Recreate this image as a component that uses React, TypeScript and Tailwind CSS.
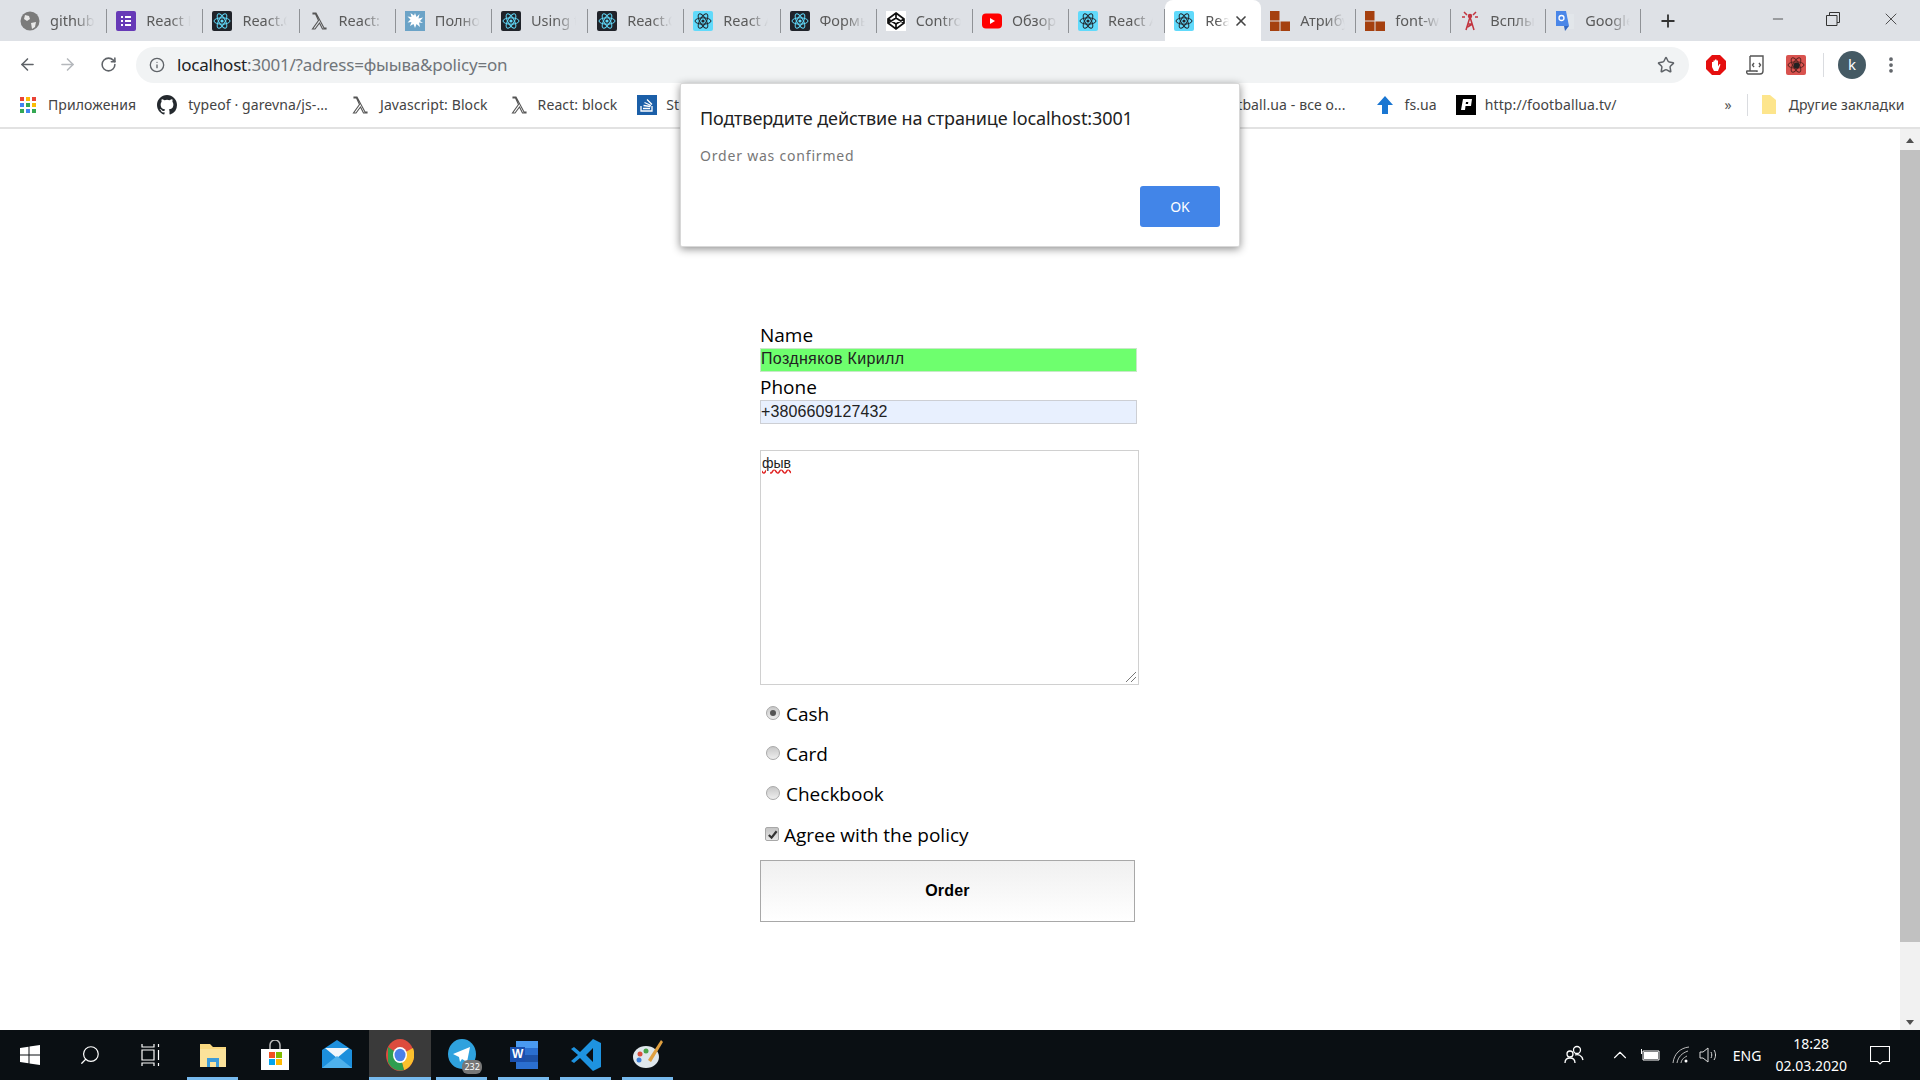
import { ArrowLeft, ArrowRight, RotateCw, Info, Star, Plus, X, Minus, ChevronUp, EllipsisVertical, Search } from "lucide-react"

type IconKind = "globe" | "list" | "atomDark" | "atomLight" | "lambda" | "splash" | "pen" | "youtube" | "blocks" | "tower" | "translate"

const tabs: { icon: IconKind; label: string; active?: boolean; narrow?: boolean }[] = [
  { icon: "globe", label: "github" },
  { icon: "list", label: "React H" },
  { icon: "atomDark", label: "React.C" },
  { icon: "lambda", label: "React: l" },
  { icon: "splash", label: "Полно" },
  { icon: "atomDark", label: "Using t" },
  { icon: "atomDark", label: "React.C" },
  { icon: "atomLight", label: "React A" },
  { icon: "atomDark", label: "Формы" },
  { icon: "pen", label: "Contro" },
  { icon: "youtube", label: "Обзор" },
  { icon: "atomLight", label: "React A" },
  { icon: "atomLight", label: "Rea", active: true },
  { icon: "blocks", label: "Атрибу", narrow: true },
  { icon: "blocks", label: "font-w", narrow: true },
  { icon: "tower", label: "Всплы", narrow: true },
  { icon: "translate", label: "Google", narrow: true },
]

function Atom({ bg, color }: { bg: string; color: string }) {
  return (
    <svg viewBox="0 0 20 20" className="h-5 w-5 shrink-0">
      <rect width="20" height="20" rx="2" fill={bg} />
      <g fill="none" stroke={color} strokeWidth="1">
        <ellipse cx="10" cy="10" rx="8" ry="3.2" />
        <ellipse cx="10" cy="10" rx="8" ry="3.2" transform="rotate(60 10 10)" />
        <ellipse cx="10" cy="10" rx="8" ry="3.2" transform="rotate(120 10 10)" />
      </g>
      <circle cx="10" cy="10" r="1.6" fill={color} />
    </svg>
  )
}

function Lambda() {
  return (
    <svg viewBox="0 0 20 20" className="h-5 w-5 shrink-0" fill="none" stroke="#555" strokeWidth="1.1">
      <path d="M4 2h3l8 15h2v1h-3.500L10.500 12 6 18H3.500L9.500 9.500 6.500 3H4z" />
    </svg>
  )
}

function Favicon({ kind }: { kind: IconKind }) {
  switch (kind) {
    case "globe":
      return (
        <svg viewBox="0 0 20 20" className="h-5 w-5 shrink-0">
          <circle cx="10" cy="10" r="9.5" fill="#7b7b7b" />
          <path d="M5 4l4 1 1 3-3 2-3-2zM11 12l5-1-1 5-3 2z" fill="#e8e8e8" />
        </svg>
      )
    case "list":
      return (
        <svg viewBox="0 0 20 20" className="h-5 w-5 shrink-0">
          <rect width="20" height="20" rx="2" fill="#673ab7" />
          <path d="M5 5h2v2H5zM9 5h6v2H9zM5 9h2v2H5zM9 9h6v2H9zM5 13h2v2H5zM9 13h6v2H9z" fill="#fff" />
        </svg>
      )
    case "atomDark":
      return <Atom bg="#20232a" color="#61dafb" />
    case "atomLight":
      return <Atom bg="#61dafb" color="#20232a" />
    case "lambda":
      return <Lambda />
    case "splash":
      return (
        <svg viewBox="0 0 20 20" className="h-5 w-5 shrink-0">
          <rect width="20" height="20" fill="#6ba3c7" />
          <path d="M10 2l1.500 4 3-3-1 4.500 4.500-1-3 3.500 3 2-4-.5 1 4.500-3.500-3-1.500 4-1.500-4-3.500 2 1.500-4-4 .5 3-3-3-3 4 .5-1-4 3.500 2.500z" fill="#fff" />
        </svg>
      )
    case "pen":
      return (
        <svg viewBox="0 0 20 20" className="h-5 w-5 shrink-0">
          <rect width="20" height="20" fill="#fff" />
          <path d="M10 2l8 6v4l-8 6-8-6V8zM10 2v5M10 13v5M2 8l8 5 8-5M2 12l8-5 8 5" fill="none" stroke="#111" strokeWidth="1.700" />
        </svg>
      )
    case "youtube":
      return (
        <svg viewBox="0 0 20 20" className="h-5 w-5 shrink-0">
          <rect y="2.500" width="20" height="15" rx="4" fill="#f00" />
          <path d="M8 7l5 3-5 3z" fill="#fff" />
        </svg>
      )
    case "blocks":
      return (
        <svg viewBox="0 0 20 20" className="h-5 w-5 shrink-0" fill="#a5400f">
          <rect x="0" y="0" width="9.500" height="9.500" />
          <rect x="0" y="10.500" width="9.500" height="9.500" />
          <rect x="10.500" y="10.500" width="9.500" height="9.500" />
        </svg>
      )
    case "tower":
      return (
        <svg viewBox="0 0 20 20" className="h-5 w-5 shrink-0" fill="none" stroke="#c2343f" strokeWidth="1.500">
          <path d="M10 6 6 19M10 6l4 13M8 13h4M7.500 16l5-3" />
          <circle cx="10" cy="5" r="1.500" fill="#c2343f" />
          <path d="M4 1l3 3M16 1l-3 3M2 6h3M18 6h-3" />
        </svg>
      )
    case "translate":
      return (
        <svg viewBox="0 0 20 20" className="h-5 w-5 shrink-0">
          <path d="M9 3h10v15H10z" fill="#e2e6ea" />
          <path d="M1 0h10l3 15H1z" fill="#4a86e8" />
          <path d="M10 20l-1-5h5z" fill="#3367c0" />
          <circle cx="6.500" cy="7" r="2.500" fill="none" stroke="#fff" strokeWidth="1.300" />
        </svg>
      )
  }
}

function Tab({ icon, label, active, narrow }: { icon: IconKind; label: string; active?: boolean; narrow?: boolean }) {
  if (active) {
    return (
      <div className="flex h-[41px] w-[96px] shrink-0 items-center rounded-t-lg bg-white pl-[9px]">
        <Favicon kind={icon} />
        <span className="ml-[11px] w-[24px] overflow-hidden text-[14.500px] whitespace-nowrap text-[#5a5a5a] [mask-image:linear-gradient(to_right,black_50%,transparent)]">{label}</span>
        <X size={16} strokeWidth={2.5} className="ml-[4px] text-[#444]" />
      </div>
    )
  }
  return (
    <div className={`flex h-[41px] shrink-0 items-center pl-[9px] ${narrow ? "w-[95px]" : "w-[96.200px]"}`}>
      <Favicon kind={icon} />
      <span className="ml-[10px] w-[45px] overflow-hidden text-[14.500px] whitespace-nowrap text-[#5a5a5a] [mask-image:linear-gradient(to_right,black_55%,transparent)]">{label}</span>
      <span className="ml-auto h-[24px] w-px bg-[#8f9296]" />
    </div>
  )
}

function TabStrip() {
  return (
    <div className="flex h-[41px] items-end bg-[#dee1e6] pl-[11px]">
      {tabs.map((t, i) => (
        <Tab key={i} icon={t.icon} label={t.label} active={t.active} narrow={t.narrow} />
      ))}
      <Plus size={20} strokeWidth={2.2} className="mb-[10px] ml-[17px] text-[#333]" />
      <div className="ml-auto flex items-center pb-[12px] text-[#333]">
        <Minus size={16} strokeWidth={1.2} className="mr-[40px]" />
        <svg viewBox="0 0 14 14" className="mr-[41px] h-[14px] w-[14px]" fill="none" stroke="#333">
          <path d="M3.500 3V.500h10v10H11M.500 3.500h10.500v10H.500z" />
        </svg>
        <X size={20} strokeWidth={1} className="mr-[19px]" />
      </div>
    </div>
  )
}

function AddressBar() {
  return (
    <div className="flex h-[44px] items-center bg-white pt-[3px] pl-[18px]">
      <ArrowLeft size={19} strokeWidth={2} className="text-[#5f6368]" />
      <ArrowRight size={19} strokeWidth={2} className="ml-[21px] text-[#b5b8bc]" />
      <RotateCw size={17} strokeWidth={2.2} className="ml-[23px] text-[#5f6368]" />
      <div className="ml-[19px] flex h-[36px] w-[1553px] items-center rounded-full bg-[#f1f3f4] pl-[13px]">
        <Info size={16} strokeWidth={2} className="text-[#5f6368]" />
        <span className="ml-[12px] text-[17px] tracking-[-0.2px] text-[#70757a]">
          <span className="text-[#202124]">localhost</span>:3001/?adress=фыыва&amp;policy=on
        </span>
        <Star size={18} strokeWidth={2} className="mr-[14px] ml-auto text-[#5f6368]" />
      </div>
      <svg viewBox="0 0 20 20" className="ml-[17px] h-[20px] w-[20px] shrink-0">
        <path d="M6 0h8l6 6v8l-6 6H6l-6-6V6z" fill="#e50f0f" />
        <path d="M6 12V7h1.500v3V5.500H9v4V4.500h1.500v5V5.500H12v6l1.500-2.500 1 .5L12 16H8z" fill="#fff" />
      </svg>
      <svg viewBox="0 0 20 20" className="ml-[20px] h-[20px] w-[20px] shrink-0" fill="none" stroke="#555" strokeWidth="1.400">
        <path d="M4 1h13v15a3 3 0 0 1-3 3H2a2 2 0 0 1-1-3h10v1M4 1v15M8 8 6.500 10 8 12M13 8l1.500 2-1.500 2" />
      </svg>
      <svg viewBox="0 0 20 20" className="ml-[20px] h-[20px] w-[20px] shrink-0">
        <rect width="20" height="20" rx="2" fill="#d9534f" />
        <g fill="none" stroke="#5a2420" strokeWidth="1">
          <ellipse cx="10" cy="10" rx="8" ry="3.200" />
          <ellipse cx="10" cy="10" rx="8" ry="3.200" transform="rotate(60 10 10)" />
          <ellipse cx="10" cy="10" rx="8" ry="3.200" transform="rotate(120 10 10)" />
        </g>
        <circle cx="10.500" cy="10.500" r="3" fill="#222" />
      </svg>
      <span className="ml-[17px] h-[24px] w-px bg-[#dadce0]" />
      <span className="ml-[14px] flex h-[28px] w-[28px] shrink-0 items-center justify-center rounded-full bg-[#455a64] text-[15px] text-white">k</span>
      <EllipsisVertical size={20} strokeWidth={2.5} className="ml-[15px] text-[#5f6368]" />
    </div>
  )
}

function Bookmark({ children, label, className }: { children?: React.ReactNode; label: string; className: string }) {
  return (
    <div className={`flex shrink-0 items-center whitespace-nowrap ${className}`}>
      {children}
      <span className="text-[14px] tracking-[0.1px] text-[#444]">{label}</span>
    </div>
  )
}

function BookmarksBar() {
  const dots = ["#ea4335", "#fbbc05", "#ea4335", "#4285f4", "#34a853", "#fbbc05", "#34a853", "#4285f4", "#34a853"]
  return (
    <div className="flex h-[44px] items-center border-b-2 border-[#e2e2e2] bg-white pb-[3px] pl-[20px]">
      <div className="grid h-4 w-4 shrink-0 grid-cols-[4px_4px_4px] grid-rows-[4px_4px_4px] gap-[2px]">
        {dots.map((c, i) => (
          <span key={i} style={{ backgroundColor: c }} />
        ))}
      </div>
      <Bookmark label="Приложения" className="ml-[12px]" />
      <Bookmark label="typeof · garevna/js-..." className="ml-[21px]">
        <svg viewBox="0 0 16 16" className="mr-[11px] h-5 w-5" fill="#24292e">
          <path d="M8 0C3.580 0 0 3.580 0 8c0 3.540 2.290 6.530 5.470 7.590.4.070.55-.17.55-.38v-1.340c-2.230.48-2.700-1.070-2.700-1.070-.36-.92-.89-1.170-.89-1.170-.73-.5.050-.49.050-.49.800.06 1.230.82 1.230.82.710 1.230 1.870.87 2.330.66.070-.52.280-.87.510-1.070-1.780-.2-3.640-.89-3.640-3.950 0-.87.310-1.590.820-2.150-.080-.2-.36-1.020.080-2.120 0 0 .67-.21 2.200.82a7.600 7.600 0 0 1 4 0c1.530-1.040 2.200-.82 2.200-.82.440 1.100.160 1.920.080 2.120.510.560.820 1.270.820 2.150 0 3.070-1.870 3.750-3.650 3.950.290.250.540.730.540 1.480v2.200c0 .21.150.46.550.38A8 8 0 0 0 16 8c0-4.420-3.580-8-8-8z" />
        </svg>
      </Bookmark>
      <Bookmark label="Javascript: Block" className="ml-[22px]">
        <span className="mr-[10px]"><Lambda /></span>
      </Bookmark>
      <Bookmark label="React: block" className="ml-[21px]">
        <span className="mr-[9px]"><Lambda /></span>
      </Bookmark>
      <Bookmark label="St" className="ml-[20px]">
        <svg viewBox="0 0 20 20" className="mr-[9px] h-5 w-5">
          <rect width="20" height="20" fill="#1b5fa8" />
          <path d="M4 11v5h11v-5M6 13.500h7M6.500 10.500l7 1M7.500 7.500l6.500 3M10 4.500l5 5" fill="none" stroke="#fff" strokeWidth="1.300" />
        </svg>
      </Bookmark>
      <Bookmark label="tball.ua - все о..." className="ml-[558px]" />
      <Bookmark label="fs.ua" className="ml-[29px]">
        <svg viewBox="0 0 20 20" className="mr-[10px] h-5 w-5" fill="#1976d2">
          <path d="M10 1 18 10h-5v9H7v-9H2z" />
        </svg>
      </Bookmark>
      <Bookmark label="http://footballua.tv/" className="ml-[19px]">
        <svg viewBox="0 0 20 20" className="mr-[9px] h-5 w-5 shrink-0">
          <rect width="20" height="20" fill="#000" />
          <path d="M5 15 7 4h9l-1 7H9.500l-.5 4zM10 7l-.3 2h2.300l.3-2z" fill="#fff" fillRule="evenodd" />
        </svg>
      </Bookmark>
      <span className="ml-[108px] text-[14px] text-[#555]">»</span>
      <span className="ml-[15px] h-[22px] w-px bg-[#dadce0]" />
      <svg viewBox="0 0 16 20" className="ml-[13px] h-[20px] w-[16px] shrink-0">
        <path d="M1 0h8l6 5v14H1z" fill="#fde58c" />
      </svg>
      <Bookmark label="Другие закладки" className="ml-[12px]" />
    </div>
  )
}

function Radio({ checked, label }: { checked?: boolean; label: string }) {
  return (
    <div className="flex h-[40px] items-center pl-[6px]">
      <span className="mb-[2px] flex h-[14px] w-[14px] items-center justify-center rounded-full border border-[#a8a8a8] bg-gradient-to-b from-[#c8c8c8] to-[#eeeeee]">
        {checked && <span className="h-[6px] w-[6px] rounded-full bg-[#555]" />}
      </span>
      <span className="ml-[6px] text-[19px] text-black">{label}</span>
    </div>
  )
}

function OrderForm() {
  return (
    <div className="ml-[760px] w-[380px] pt-[193px] font-['Open_Sans',sans-serif]">
      <div className="h-[26px] text-[19px] leading-[26px] text-black">Name</div>
      <input
        defaultValue="Поздняков Кирилл"
        className="block h-[24px] w-[377px] border border-[#c8e8c8] bg-[#6eff6e] px-0 pb-[2px] font-['Liberation_Sans',sans-serif] text-[16px] tracking-[0.35px] text-[#222] outline-none"
      />
      <div className="h-[28px] pt-[1px] text-[19px] leading-[28px] text-black">Phone</div>
      <input
        defaultValue="+3806609127432"
        className="block h-[24px] w-[377px] border border-[#cdcfd4] bg-[#e8f0fe] px-0 font-['Liberation_Sans',sans-serif] text-[16px] tracking-[0.1px] text-[#222] outline-none"
      />
      <div className="relative mt-[26px] h-[235px] w-[379px] border border-[#d0d0d0] bg-white pt-[2px] pl-[1px] font-['Liberation_Sans',sans-serif] text-[14px] text-[#222]">
        <span className="underline decoration-[#e02020] decoration-wavy">фыв</span>
        <svg viewBox="0 0 12 12" className="absolute right-[1px] bottom-[1px] h-3 w-3" stroke="#777" fill="none">
          <path d="M1 11 11 1M6 11l5-5" />
        </svg>
      </div>
      <div className="mt-[9px]">
        <Radio checked label="Cash" />
        <Radio label="Card" />
        <Radio label="Checkbook" />
      </div>
      <div className="flex h-[41px] items-center pl-[5px]">
        <span className="mb-[1px] flex h-[14px] w-[14px] items-center justify-center rounded-[2px] border border-[#a8a8a8] bg-gradient-to-b from-[#c4c4c4] to-[#e8e8e8]">
          <svg viewBox="0 0 12 12" className="h-[11px] w-[11px]" fill="none" stroke="#333" strokeWidth="2.400">
            <path d="M2 6.500 5 9.500 10.500 2.500" />
          </svg>
        </span>
        <span className="ml-[5px] pt-[2px] text-[19px] text-black">Agree with the policy</span>
      </div>
      <button className="mt-[5px] block h-[62px] w-[375px] border border-[#a8a8a8] bg-gradient-to-b from-[#f0f0f0] to-white font-['Liberation_Sans',sans-serif] text-[16px] font-bold tracking-[0.2px] text-black">
        Order
      </button>
    </div>
  )
}

function ConfirmDialog() {
  return (
    <div className="absolute top-[83px] left-[680px] h-[164px] w-[560px] rounded-[2px] border border-[#d8d8d8] bg-white pt-[20px] pl-[19px] shadow-[0_2px_8px_rgba(0,0,0,0.45)]">
      <div className="font-['Noto_Sans',sans-serif] text-[18px] leading-[28px] tracking-[-0.1px] text-[#222]">Подтвердите действие на странице localhost:3001</div>
      <div className="mt-[13px] font-['Noto_Sans',sans-serif] text-[14px] tracking-[0.8px] text-[#777]">Order was confirmed</div>
      <div className="mt-[20px] mr-[19px] flex justify-end">
        <button className="h-[41px] w-[80px] rounded-[3px] bg-[#4285e8] font-['Noto_Sans',sans-serif] text-[14px] text-white">OK</button>
      </div>
    </div>
  )
}

function Scrollbar() {
  return (
    <div className="flex w-[20px] shrink-0 flex-col items-center bg-[#f1f1f1]">
      <span className="mt-[9px] mb-[7px] h-0 w-0 border-x-[4px] border-b-[5px] border-x-transparent border-b-[#505050]" />
      <span className="h-[792px] w-full bg-[#c1c1c1]" />
      <span className="mt-auto mb-[5px] h-0 w-0 border-x-[4px] border-t-[5px] border-x-transparent border-t-[#505050]" />
    </div>
  )
}

function TaskSlot({ children, running, active }: { children: React.ReactNode; running?: boolean; active?: boolean }) {
  return (
    <div className={`relative flex h-full w-[62.200px] items-center justify-center ${active ? "bg-[#3a3a3a]" : ""}`}>
      {children}
      {running && <span className={`absolute bottom-0 h-[3px] bg-[#76b9ed] ${active ? "left-0 w-full" : "left-[5px] w-[51px]"}`} />}
    </div>
  )
}

function Taskbar() {
  return (
    <div className="flex h-[50px] items-center bg-[#0a0f13] font-['Noto_Sans',sans-serif] text-white">
      <div className="flex h-full w-[60px] items-center justify-center">
        <svg viewBox="0 0 20 20" className="h-5 w-5" fill="#fff">
          <path d="M0 3l8.500-1.200v7.700H0zM9.500 1.600 20 0v9.500H9.500zM0 10.500h8.500v7.700L0 17zM9.500 10.500H20V20L9.500 18.400z" />
        </svg>
      </div>
      <div className="flex h-full w-[60px] items-center justify-center">
        <Search size={22} strokeWidth={1.300} className="-scale-x-100" />
      </div>
      <div className="flex h-full w-[62px] items-center justify-center">
        <svg viewBox="0 0 20 22" className="h-[22px] w-5" fill="none" stroke="#fff" strokeWidth="1.200">
          <path d="M1 0v3h12V0M1 6h12v10H1zM1 22v-3h12v3M17.500 0v3M17.500 6v10M17.500 19v3" />
        </svg>
      </div>
      <TaskSlot running>
        <svg viewBox="0 0 28 28" className="h-7 w-7">
          <path d="M1 3h10l3 3h13v20H1z" fill="#f9d77e" />
          <path d="M1 8h26v18H1z" fill="#fbe29a" />
          <path d="M8 17h12v9h-3v-5h-6v5H8z" fill="#3d9bd8" />
        </svg>
      </TaskSlot>
      <TaskSlot>
        <svg viewBox="0 0 28 30" className="h-[30px] w-7">
          <path d="M9 9V5a5 5 0 0 1 10 0v4" fill="none" stroke="#bbb" strokeWidth="1.500" />
          <path d="M0 9h28v21H0z" fill="#fff" />
          <path d="M8 12h6v6H8z" fill="#f25022" />
          <path d="M15 12h6v6h-6z" fill="#7fba00" />
          <path d="M8 19h6v6H8z" fill="#00a4ef" />
          <path d="M15 19h6v6h-6z" fill="#ffb900" />
        </svg>
      </TaskSlot>
      <TaskSlot>
        <svg viewBox="0 0 30 30" className="h-[30px] w-[30px]">
          <path d="M0 10 15 0l15 10v18H0z" fill="#1c8fdc" />
          <path d="M3 8h24L15 18z" fill="#f0f6fb" />
          <path d="M0 28 15 16l15 12z" fill="#4eb1ec" />
        </svg>
      </TaskSlot>
      <TaskSlot active running>
        <svg viewBox="0 0 28 32" className="h-8 w-7">
          <ellipse cx="14" cy="16" rx="14" ry="16" fill="#dd4b3e" />
          <path d="M14 16 27 9a14 16 0 0 1-9 22z" fill="#fbc02d" />
          <path d="M14 16 18 31a14 16 0 0 1-16-8L2 8z" fill="#2e9e4f" />
          <ellipse cx="14" cy="16" rx="7" ry="8" fill="#fff" />
          <ellipse cx="14" cy="16" rx="5.500" ry="6.300" fill="#4a80e8" />
        </svg>
      </TaskSlot>
      <TaskSlot running>
        <div className="relative h-[32px] w-[30px]">
          <svg viewBox="0 0 30 32" className="h-[32px] w-[30px]">
            <ellipse cx="15" cy="15" rx="14" ry="15" fill="#2fa2de" />
            <path d="M6 15 23 8l-3 15-5-3-2 3-1-5z" fill="#fff" />
          </svg>
          <span className="absolute right-[-5px] bottom-[-3px] rounded-[6px] bg-[#777] px-[2px] text-[9px] leading-[14px]">232</span>
        </div>
      </TaskSlot>
      <TaskSlot running>
        <div className="relative h-[30px] w-[30px]">
          <svg viewBox="0 0 30 30" className="h-[30px] w-[30px]">
            <path d="M7 1h22v28H7z" fill="#2b6fd0" />
            <path d="M7 1h22v7H7z" fill="#4a9af0" />
            <path d="M7 15h22v7H7z" fill="#1d52a8" />
            <path d="M1 7h15v15H1z" fill="#1a4fae" />
          </svg>
          <span className="absolute top-[8px] left-[3px] font-['Liberation_Sans',sans-serif] text-[12px] leading-[13px] font-bold">W</span>
        </div>
      </TaskSlot>
      <TaskSlot running>
        <svg viewBox="0 0 30 32" className="h-[32px] w-[30px]" fill="#1e93e0">
          <path d="M22 0l8 4v24l-8 4-13-13-6 5-3-2 7-6-7-6 3-2 6 5zm0 9-7 7 7 7z" />
        </svg>
      </TaskSlot>
      <TaskSlot running>
        <svg viewBox="0 0 30 32" className="h-[32px] w-[30px]">
          <ellipse cx="13" cy="18" rx="13" ry="11" fill="#dfe7ec" />
          <circle cx="7" cy="15" r="2.500" fill="#d94f3d" />
          <circle cx="13" cy="12" r="2.500" fill="#4aa54a" />
          <circle cx="6" cy="21" r="2.500" fill="#3d7fd9" />
          <path d="M28 1l2 2-12 20-3-2z" fill="#e0a040" />
        </svg>
      </TaskSlot>
      <div className="ml-auto flex h-full items-center">
        <svg viewBox="0 0 20 20" className="h-5 w-5" fill="none" stroke="#fff" strokeWidth="1.300">
          <circle cx="13" cy="5" r="3.500" />
          <circle cx="6" cy="9" r="3" />
          <path d="M1 18c0-3 2-5 5-5s5 2 5 5M11 10c3-1 7 0 8 5" />
        </svg>
        <ChevronUp size={22} strokeWidth={1.200} className="ml-[25px]" />
        <svg viewBox="0 0 22 12" className="ml-[7px] h-3 w-[22px]" fill="#fff">
          <path d="M0 1h3M0 4h3M3 0h1v5H3z" />
          <path d="M5 2h16v9H5z" fill="none" stroke="#fff" />
          <path d="M6 3h14v7H6z" />
        </svg>
        <svg viewBox="0 0 18 18" className="ml-[12px] h-[18px] w-[18px]" fill="none" stroke="#bbb" strokeWidth="1">
          <path d="M1 17C2 8 8 2 17 1M5 17c1-6 5-10 11-12M9 17c.5-3 2-5 6-7" />
          <circle cx="14" cy="15" r="1.500" fill="#fff" stroke="none" />
        </svg>
        <svg viewBox="0 0 20 18" className="ml-[9px] h-[18px] w-5" fill="none" stroke="#ddd" strokeWidth="1">
          <path d="M1 6h3l5-4v14l-5-4H1zM12 6c1 2 1 4 0 6M15 4c2 3 2 7 0 10" />
        </svg>
        <span className="ml-[14px] text-[14px]">ENG</span>
        <div className="ml-[14px] flex flex-col items-center text-[14px] leading-[22px]">
          <span>18:28</span>
          <span>02.03.2020</span>
        </div>
        <svg viewBox="0 0 20 20" className="mr-[30px] ml-[23px] h-5 w-5" fill="none" stroke="#fff" strokeWidth="1.100">
          <path d="M.500 1.500h19v15h-7L10 19l-2.500-2.500h-7z" />
        </svg>
      </div>
    </div>
  )
}

export default function App() {
  return (
    <div className="relative flex h-[1080px] w-[1920px] flex-col overflow-hidden bg-white font-['Noto_Sans',sans-serif]">
      <TabStrip />
      <AddressBar />
      <BookmarksBar />
      <div className="flex min-h-0 flex-1">
        <main className="flex-1">
          <OrderForm />
        </main>
        <Scrollbar />
      </div>
      <Taskbar />
      <ConfirmDialog />
    </div>
  )
}
